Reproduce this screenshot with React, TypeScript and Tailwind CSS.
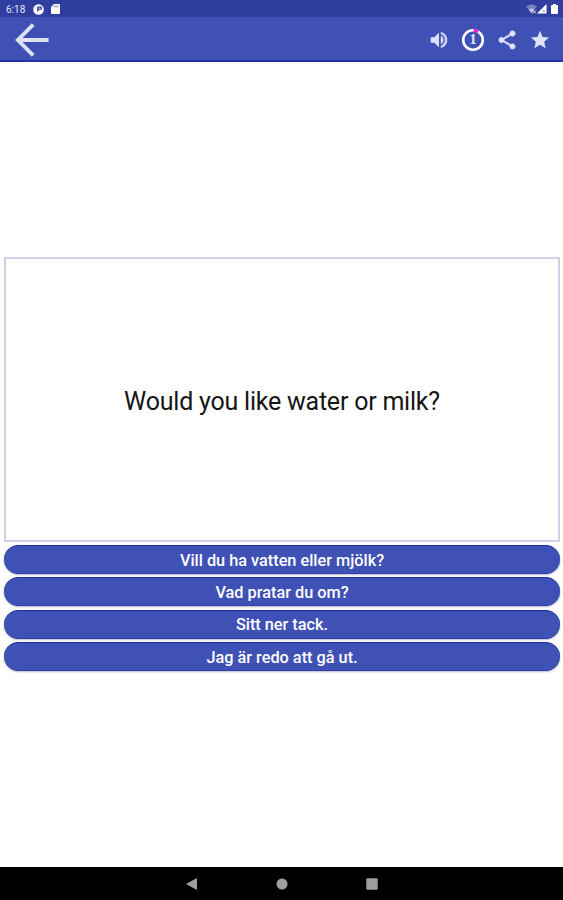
import React from 'react';

const answers = [
    'Vill du ha vatten eller mjölk?',
    'Vad pratar du om?',
    'Sitt ner tack.',
    'Jag är redo att gå ut.',
];

const StatusBar: React.FC = () => (
    <div className="flex h-[17px] shrink-0 items-center bg-[#303f9f] pl-[6px] pr-[5px] text-white">
        <span className="w-[27px] pt-[2px] text-[10px] leading-[15px] text-[#e3e6f5]">6:18</span>
        <svg className="mt-px h-[11px] w-[11px]" viewBox="0 0 11 11">
            <circle cx="5.5" cy="5.5" r="5.3" fill="#fff" />
            <path d="M4.2 2.6h4.6v3.2H6.3L4.2 8.2z" fill="#303f9f" />
            <path d="M5.2 4.2h2.4" stroke="#fff" strokeWidth="0.7" />
        </svg>
        <svg className="ml-[7px] mt-px h-[10px] w-[9px]" viewBox="0 0 9 10">
            <path d="M3 0h5a1 1 0 0 1 1 1v8a1 1 0 0 1-1 1H1a1 1 0 0 1-1-1V3z" fill="#fff" />
            <path d="M3.2 1.4v2M5 1.4v2M6.8 1.4v2" stroke="#303f9f" strokeWidth="0.7" />
        </svg>
        <div className="ml-auto flex items-center pt-px">
            <svg className="h-[10px] w-[11px]" viewBox="0 0 11 10">
                <path d="M0 2.5Q5.5-1.5 11 2.5L5.5 9.5z" fill="#fff" fillOpacity="0.35" />
                <path d="M2.8 5.6Q5.5 3.6 8.2 5.6L5.5 9.5z" fill="#fff" fillOpacity="0.5" />
                <path d="M7 6.5l3 3m0-3l-3 3" stroke="#fff" strokeWidth="0.8" />
            </svg>
            <svg className="h-[10px] w-[10px]" viewBox="0 0 10 10">
                <path d="M9.5 0v9.5H0z" fill="#fff" />
                <path d="M5.8 5.8l2 2m0-2l-2 2" stroke="#303f9f" strokeWidth="0.5" />
            </svg>
            <svg className="ml-[4px] h-[10px] w-[7px]" viewBox="0 0 7 10">
                <path d="M2 0h3v1h1a1 1 0 0 1 1 1v7a1 1 0 0 1-1 1H1a1 1 0 0 1-1-1V2a1 1 0 0 1 1-1h1z" fill="#fff" />
            </svg>
        </div>
    </div>
);

const Toolbar: React.FC = () => (
    <div className="flex h-[45px] shrink-0 items-center border-b-2 border-[#1b35ab] bg-[#3f51b5] pl-[15px] pr-[12px] pt-[2px] text-[#dfe3f7]">
        <button aria-label="Back">
            <svg className="h-[34px] w-[34px]" viewBox="0 0 34 34" fill="none" stroke="currentColor" strokeWidth="3.8">
                <path d="M33.5 17H3M18.200 1.6L2.8 17l15.400 15.4" />
            </svg>
        </button>
        <div className="ml-auto flex items-center">
            <svg className="h-[22px] w-[22px]" viewBox="0 0 24 24" fill="currentColor">
                <path d="M14 5.29c2.89.86 5 3.54 5 6.71s-2.11 5.85-5 6.71z" fillOpacity="0.35" />
                <path d="M3 9v6h4l5 5V4L7 9H3zm13.5 3c0-1.77-1.02-3.29-2.5-4.03v8.05c1.48-.73 2.5-2.25 2.5-4.02zM14 3.23v2.06c2.89.86 5 3.54 5 6.71s-2.11 5.85-5 6.71v2.06c4.01-.91 7-4.49 7-8.77s-2.99-7.86-7-8.77z" />
            </svg>
            {/* Score ring */}
            <div className="relative ml-[11px] flex h-[24px] w-[24px] items-center justify-center">
                <svg className="absolute inset-0" viewBox="0 0 24 24" fill="none" strokeWidth="2.6">
                    <circle cx="12" cy="12" r="9.8" stroke="#fff" />
                    <path d="M12.6 2.2A9.8 9.8 0 0 1 17.2 3.7" stroke="#f01fd0" strokeWidth="3" />
                </svg>
                <span className="relative font-['Liberation_Serif'] text-[14px] font-bold leading-none text-[#e8eafa]">1</span>
            </div>
            <svg className="ml-[11px] h-[22px] w-[22px]" viewBox="0 0 24 24" fill="currentColor">
                <path d="M18 16.08c-.76 0-1.44.3-1.96.77L8.91 12.7c.05-.23.09-.46.09-.7s-.04-.47-.09-.7l7.05-4.11c.54.5 1.25.81 2.04.81 1.66 0 3-1.34 3-3s-1.34-3-3-3-3 1.34-3 3c0 .24.04.47.09.7L8.04 9.81C7.5 9.31 6.79 9 6 9c-1.66 0-3 1.34-3 3s1.34 3 3 3c.79 0 1.5-.31 2.04-.81l7.12 4.16c-.05.21-.08.43-.08.65 0 1.61 1.31 2.92 2.92 2.92s2.92-1.31 2.92-2.92-1.31-2.92-2.92-2.92z" stroke="currentColor" strokeWidth="0.6" />
            </svg>
            <svg className="ml-[11px] h-[22px] w-[22px]" viewBox="0 0 24 24" fill="currentColor">
                <path d="M12 17.27L18.18 21l-1.64-7.03L22 9.24l-7.19-.61L12 2 9.19 8.63 2 9.24l5.46 4.73L5.82 21z" />
            </svg>
        </div>
    </div>
);

const App: React.FC = () => {
    return (
        <div className="flex h-[900px] w-[563px] flex-col overflow-hidden bg-white font-[Roboto,sans-serif]">
            <StatusBar />
            <Toolbar />

            <main className="flex flex-1 flex-col pl-[4px] pr-[3px] pt-[195px]">
                {/* Question */}
                <div className="flex h-[285px] shrink-0 items-center justify-center border-2 border-[#d0d0e8] pt-[5px] text-[25px] tracking-[-0.22px] text-[#151515]">
                    <span>Would you like water or milk?</span>
                </div>

                {/* Answers */}
                <div className="mt-[3px] flex flex-col gap-[3.3px]">
                    {answers.map((answer) => (
                        <button
                            key={answer}
                            className="flex h-[29px] shrink-0 items-center justify-center rounded-full border-y border-t-[#1c2fa5] border-b-[#2b41b0] bg-[#3f51b5] pt-[3px] text-[16.3px] font-medium leading-none text-white shadow-[0_1px_2px_rgba(60,40,90,0.35)]"
                        >
                            {answer}
                        </button>
                    ))}
                </div>
            </main>

            {/* System navigation */}
            <nav className="flex h-[33px] shrink-0 items-center justify-center gap-[78px] bg-black">
                <svg className="h-[12px] w-[12px]" viewBox="0 0 12 12">
                    <path d="M11 0v12L0 6z" fill="#9e9e9e" />
                </svg>
                <svg className="h-[12px] w-[12px]" viewBox="0 0 12 12">
                    <circle cx="6" cy="6" r="5.5" fill="#9e9e9e" />
                </svg>
                <svg className="h-[12px] w-[12px]" viewBox="0 0 12 12">
                    <rect x="0.3" y="0.3" width="11.4" height="11.4" rx="1" fill="#9e9e9e" />
                </svg>
            </nav>
        </div>
    );
};

export default App;
